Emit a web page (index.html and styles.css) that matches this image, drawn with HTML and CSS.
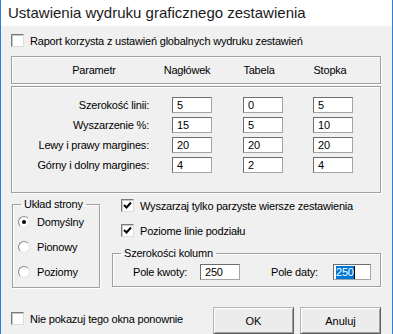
FILE: index.html
```html
<!DOCTYPE html>
<html lang="pl">
<head>
	<meta charset="UTF-8" />
	<title>Ustawienia wydruku graficznego zestawienia</title>
	<link rel="stylesheet" href="styles.css">
</head>
<body>
	<div class="window">
		<div class="titlebar">Ustawienia wydruku graficznego zestawienia</div>
		<div class="content">
			<label class="check-row">
				<span class="chk"></span>Raport korzysta z ustawień globalnych wydruku zestawień
			</label>

			<div class="box box-head">
				<span class="h-param">Parametr</span>
				<span class="h-col">Nagłówek</span>
				<span class="h-col">Tabela</span>
				<span class="h-col">Stopka</span>
			</div>

			<div class="box box-body">
				<span class="lbl">Szerokość linii:</span>
				<span class="field">5</span><span class="field">0</span><span class="field">5</span>
				<span class="lbl">Wyszarzenie %:</span>
				<span class="field">15</span><span class="field">5</span><span class="field">10</span>
				<span class="lbl">Lewy i prawy margines:</span>
				<span class="field">20</span><span class="field">20</span><span class="field">20</span>
				<span class="lbl">Górny i dolny margines:</span>
				<span class="field">4</span><span class="field">2</span><span class="field">4</span>
			</div>

			<div class="lower">
				<fieldset class="group layout">
					<legend>Układ strony</legend>
					<label class="radio-row"><span class="radio on"></span>Domyślny</label>
					<label class="radio-row"><span class="radio"></span>Pionowy</label>
					<label class="radio-row"><span class="radio"></span>Poziomy</label>
				</fieldset>

				<div class="right">
					<label class="check-row">
						<span class="chk checked"><svg viewBox="0 0 11 11" width="11" height="11"><polyline points="2,5 4.5,7.5 9,2.5" fill="none" stroke="#000" stroke-width="2"/></svg></span>Wyszarzaj tylko parzyste wiersze zestawienia
					</label>
					<label class="check-row">
						<span class="chk checked"><svg viewBox="0 0 11 11" width="11" height="11"><polyline points="2,5 4.5,7.5 9,2.5" fill="none" stroke="#000" stroke-width="2"/></svg></span>Poziome linie podziału
					</label>
					<fieldset class="group widths">
						<legend>Szerokości kolumn</legend>
						<span class="w-lbl">Pole kwoty:</span>
						<span class="field">250</span>
						<span class="w-lbl second">Pole daty:</span>
						<span class="field narrow"><span class="sel">250</span><span class="caret"></span></span>
					</fieldset>
				</div>
			</div>

			<div class="footer">
				<label class="check-row">
					<span class="chk"></span>Nie pokazuj tego okna ponownie
				</label>
				<div class="buttons">
					<button class="btn">OK</button>
					<button class="btn">Anuluj</button>
				</div>
			</div>
		</div>
	</div>
</body>
</html>
```

FILE: styles.css
```css
body{
	margin: 0;
	font-family: "Liberation Sans", Arial, sans-serif;
	font-size: 11px;
	letter-spacing: -0.2px;
	color: #000;
}
.window{
	width: 393px;
	height: 334px;
	box-sizing: border-box;
	border-left: 1px solid #2b7fd4;
	border-right: 1px solid #2b7fd4;
	background: #f0f0f0;
	display: flex;
	flex-direction: column;
	overflow: hidden;
}
.titlebar{
	height: 27px;
	line-height: 25px;
	padding-left: 7px;
	background: #fff;
	font-size: 15px;
	letter-spacing: 0;
	color: #1a1a1a;
}
.content{
	padding: 8px 11px 0 10px;
}

/* checkbox */
.check-row{
	display: flex;
	align-items: center;
	height: 13px;
	white-space: nowrap;
}
.chk{
	width: 11px;
	height: 11px;
	margin-right: 6px;
	background: #fff;
	border: 1px solid;
	border-color: #7a7a7a #dcdcdc #dcdcdc #7a7a7a;
	box-shadow: inset 1px 1px 0 #c8c8c8;
	flex: none;
	display: flex;
}

/* etched boxes */
.box{
	border: 1px solid #a0a0a0;
	box-shadow: inset 1px 1px 0 #fff, 1px 1px 0 #fff;
}
.box-head{
	margin-top: 9px;
	height: 26px;
	display: grid;
	grid-template-columns: 164px 22px 122px 20px;
	align-items: center;
}
.box-head span{
	display: flex;
	justify-content: center;
	white-space: nowrap;
}
.box-body{
	margin-top: 2px;
	height: 95px;
	box-sizing: content-box;
	padding-top: 10px;
	display: grid;
	grid-template-columns: 137px 63px 71px 70px;
	grid-auto-rows: 16px;
	row-gap: 4px;
	align-content: start;
}
.lbl{
	text-align: right;
	line-height: 16px;
	white-space: nowrap;
}
.box-body .field{
	justify-self: end;
}
.field{
	width: 40px;
	height: 16px;
	box-sizing: border-box;
	background: #fff;
	border: 1px solid;
	border-color: #6d6d6d #a5a5a5 #a5a5a5 #6d6d6d;
	padding-left: 4px;
	line-height: 14px;
	display: flex;
	align-items: center;
}

/* lower part */
.lower{
	display: flex;
	margin-top: 5px;
}
.group{
	margin: 0;
	padding: 0;
	border: 1px solid #a0a0a0;
	box-shadow: inset 1px 1px 0 #fff, 1px 1px 0 #fff;
}
.group legend{
	padding: 0 3px;
	line-height: 13px;
}
.layout{
	width: 88px;
	height: 90px;
	box-sizing: border-box;
	margin-left: 1px;
	padding: 4px 0 0 5px;
	display: flex;
	flex-direction: column;
	gap: 12px;
}
.layout legend{
	margin-left: 3px;
}
.radio-row{
	display: flex;
	align-items: center;
	height: 13px;
}
.radio{
	width: 10px;
	height: 10px;
	margin-right: 7px;
	border-radius: 50%;
	background: #fff;
	border: 1px solid;
	border-color: #8a8a8a #e4e4e4 #e4e4e4 #8a8a8a;
	display: flex;
	align-items: center;
	justify-content: center;
}
.radio.on::after{
	content: "";
	width: 4px;
	height: 4px;
	border-radius: 50%;
	background: #000;
}
.right{
	flex: 1;
	margin-left: 12px;
	padding-top: 1px;
	display: flex;
	flex-direction: column;
}
.right .check-row{
	margin-left: 9px;
	margin-bottom: 12px;
}
.widths{
	margin-top: -2px;
	height: 40px;
	box-sizing: border-box;
	padding: 4px 0 0 20px;
	display: flex;
	align-items: center;
}
.widths legend{
	margin-left: -12px;
}
.w-lbl{
	width: 67px;
	white-space: nowrap;
}
.w-lbl.second{
	margin-left: 31px;
	width: 62px;
}
.field.narrow{
	width: 38px;
	padding-left: 2px;
}
.sel{
	background: #0078d7;
	color: #fff;
	line-height: 13px;
}
.caret{
	width: 1px;
	height: 13px;
	background: #000;
}

/* footer */
.footer{
	display: flex;
	align-items: center;
	justify-content: space-between;
	margin-top: 19px;
}
.footer .check-row{
	margin-bottom: 4px;
}
.buttons{
	display: flex;
	gap: 6px;
}
.btn{
	width: 81px;
	height: 27px;
	margin: 0;
	font-family: "Liberation Sans", Arial, sans-serif;
	font-size: 11px;
	color: #000;
	background: #ececec;
	border: 1px solid;
	border-color: #b4b4b4 #5e5e5e #5e5e5e #b4b4b4;
	box-shadow: inset 1px 1px 0 #fff, inset -1px -1px 0 #a0a0a0;
}
```
